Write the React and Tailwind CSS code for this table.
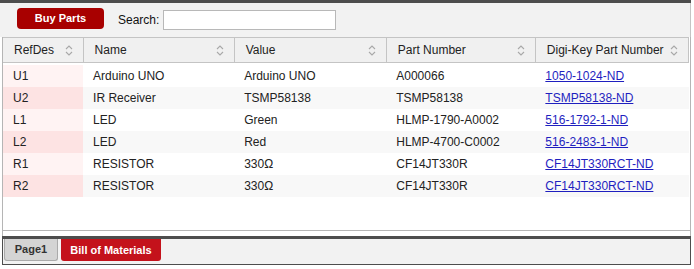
import React from "react";

const rows = [
  { ref: "U1", name: "Arduino UNO", value: "Arduino UNO", part: "A000066", dk: "1050-1024-ND" },
  { ref: "U2", name: "IR Receiver", value: "TSMP58138", part: "TSMP58138", dk: "TSMP58138-ND" },
  { ref: "L1", name: "LED", value: "Green", part: "HLMP-1790-A0002", dk: "516-1792-1-ND" },
  { ref: "L2", name: "LED", value: "Red", part: "HLMP-4700-C0002", dk: "516-2483-1-ND" },
  { ref: "R1", name: "RESISTOR", value: "330Ω", part: "CF14JT330R", dk: "CF14JT330RCT-ND" },
  { ref: "R2", name: "RESISTOR", value: "330Ω", part: "CF14JT330R", dk: "CF14JT330RCT-ND" },
];

const columns = [
  { label: "RefDes", width: "w-[80px]" },
  { label: "Name", width: "w-[151px]" },
  { label: "Value", width: "w-[152px]" },
  { label: "Part Number", width: "w-[149px]" },
  { label: "Digi-Key Part Number", width: "w-[153px]" },
];

// up/down chevrons shown on sortable headers
const SortIcon = () => (
  <svg width="8" height="11" viewBox="0 0 8 11" className="shrink-0">
    <path d="M1 4 L4 1 L7 4" fill="none" stroke="#a8a8a8" strokeWidth="1.1" />
    <path d="M1 7 L4 10 L7 7" fill="none" stroke="#a8a8a8" strokeWidth="1.1" />
  </svg>
);

export default function App() {
  return (
    <div className="w-[691px] h-[269px] bg-white font-['Liberation_Sans',Arial,sans-serif] text-[12px] text-[#222]">
      <div className="h-[3px] bg-[#4d4d4d]" />

      <div className="h-[34px] bg-[#f2f2f2] border-r border-[#c4c4c4] flex items-center pl-[17px]">
        <button className="w-[87px] h-[21px] -mt-[3px] rounded-[4px] bg-[#a80000] text-white font-bold text-[11px]">
          Buy Parts
        </button>
        <span className="ml-[14px] text-[12px] text-[#111]">Search:</span>
        <input className="ml-[4px] w-[173px] h-[20px] bg-white border border-[#b8b8b8] outline-none" />
      </div>

      <div className="h-[194px] ml-[2px] border-l border-r border-b border-[#b5b5b5] bg-white">
        <table className="table-fixed border-collapse w-[686px]">
          <thead>
            <tr className="h-[25px] bg-[#f0f0f0]">
              {columns.map((c) => (
                <th
                  key={c.label}
                  className={`${c.width} border-t border-b border-r border-[#c4c4c4] pl-[11px] pr-[10px] text-left font-normal text-[#222]`}
                >
                  <div className="flex items-center justify-between">
                    <span>{c.label}</span>
                    <SortIcon />
                  </div>
                </th>
              ))}
            </tr>
          </thead>
          <tbody>
            <tr className="h-[2px]" />
            {rows.map((r, i) => (
              <tr key={r.ref} className={`h-[22px] ${i % 2 ? "bg-[#f8f8f8]" : "bg-white"}`}>
                <td className={`px-[10px] ${i % 2 ? "bg-[#fde3e3]" : "bg-[#fff3f3]"}`}>{r.ref}</td>
                <td className="px-[10px]">{r.name}</td>
                <td className="px-[10px]">{r.value}</td>
                <td className="px-[10px]">{r.part}</td>
                <td className="px-[10px]">
                  <a href="#" className="text-[#1f1fbf] underline">
                    {r.dk}
                  </a>
                </td>
              </tr>
            ))}
          </tbody>
        </table>
      </div>

      <div className="h-[5px] ml-[2px] border-l border-r border-[#b5b5b5]" />
      <div className="h-[3px] ml-[2px] bg-[#4d4d4d]" />
      <div className="h-[26px] ml-[2px] bg-[#f2f2f2] border-l border-r border-b border-[#4d4d4d] flex items-start gap-[3px] pl-[1px]">
        <div className="w-[54px] h-[22px] bg-[#d4d4d4] border border-t-0 border-[#aaa] rounded-b-[3px] flex items-center justify-center font-bold text-[11px] text-[#333]">
          Page1
        </div>
        <div className="w-[100px] h-[22px] bg-[#c4121b] rounded-b-[3px] flex items-center justify-center font-bold text-[11px] text-white">
          Bill of Materials
        </div>
      </div>
    </div>
  );
}
